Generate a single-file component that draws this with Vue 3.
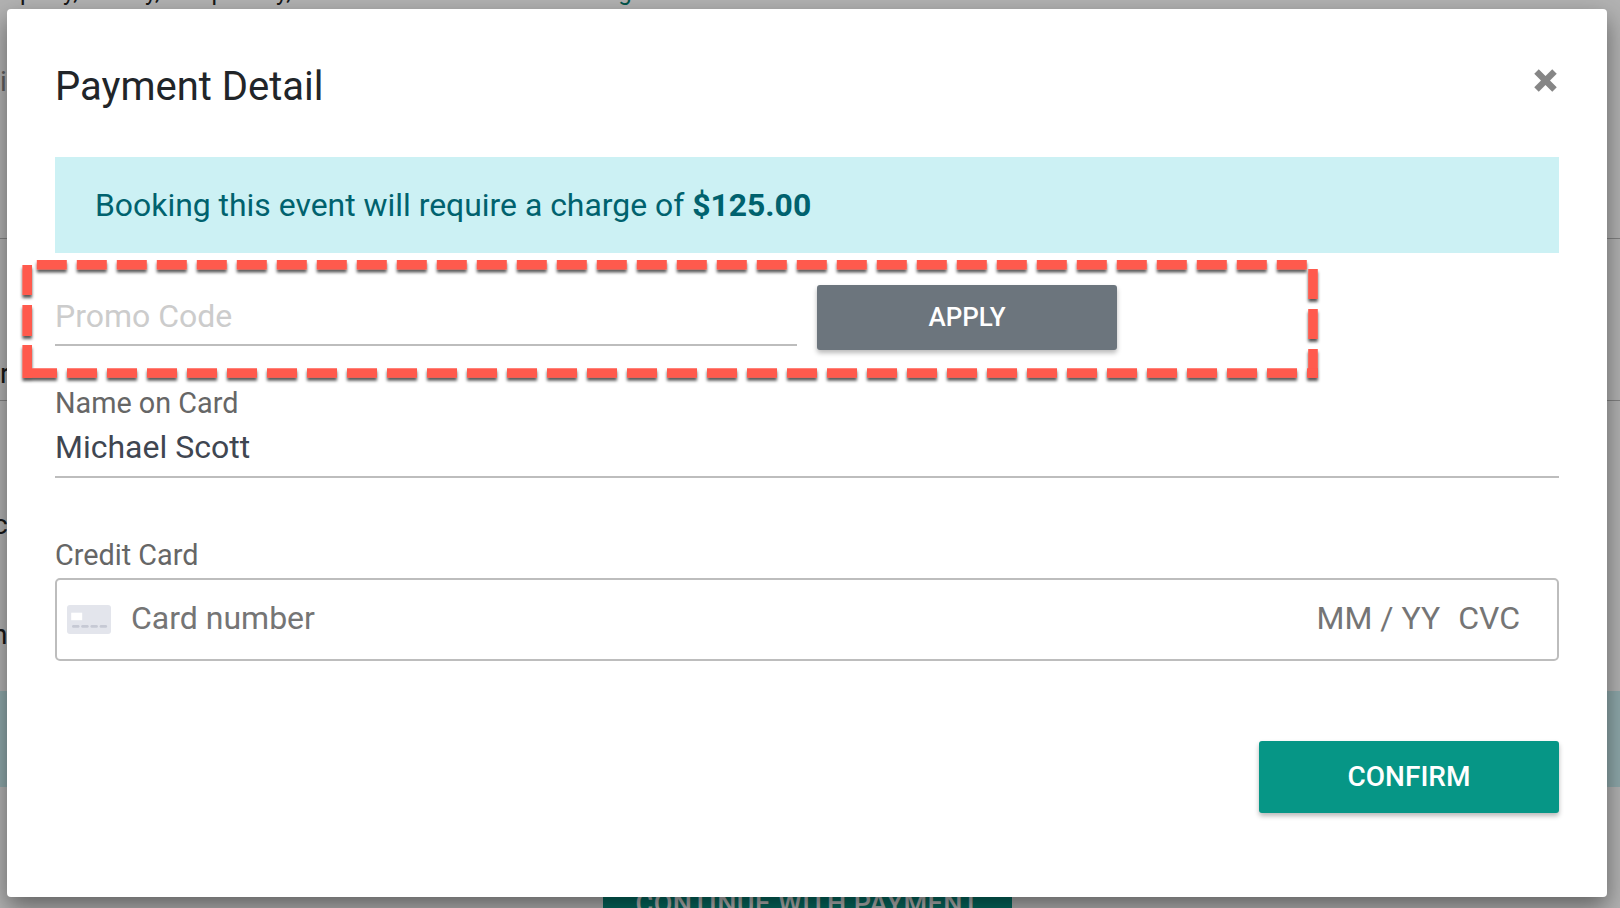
<script setup>
const rows = [
  { label: 'Name on Card', value: 'Michael Scott' }
]
</script>

<template>
  <div class="page">
    <div class="backdrop">
      <p class="bg-top">party, history, and privacy, and other details in the <span class="bg-link">booking</span></p>
      <span class="bg-edge e-i">in</span>
      <span class="bg-edge e-r">r</span>
      <span class="bg-edge e-c">c</span>
      <span class="bg-edge e-n">n</span>
      <div class="bg-rule rule-a"></div>
      <div class="bg-rule rule-b"></div>
      <div class="bg-band"></div>
      <div class="bg-btn">CONTINUE WITH PAYMENT</div>
    </div>
    <div class="scrim"></div>
    <section class="modal">
      <header class="head">
        <h2>Payment Detail</h2>
        <svg class="close" viewBox="0 0 24 24" width="27" height="27">
          <path d="M2 6 L6 2 L12 8 L18 2 L22 6 L16 12 L22 18 L18 22 L12 16 L6 22 L2 18 L8 12 Z" fill="#868686" />
        </svg>
      </header>
      <div class="alert">Booking this event will require a charge of <b>$125.00</b></div>
      <div class="promo">
        <div class="promo-input">Promo Code</div>
        <button class="btn apply">APPLY</button>
      </div>
      <div v-for="r in rows" :key="r.label" class="field">
        <label>{{ r.label }}</label>
        <div class="value">{{ r.value }}</div>
      </div>
      <div class="card-block">
        <label>Credit Card</label>
        <div class="card-box">
          <svg class="card-icon" width="44" height="29" viewBox="0 0 44 29">
            <rect width="44" height="29" rx="3" fill="#e3e5ec" />
            <rect x="4.2" y="7.7" width="11" height="7.5" fill="#fff" />
            <g fill="#c6c9d4">
              <rect x="5" y="20" width="7.5" height="2.8" rx="1.4" />
              <rect x="14.2" y="20" width="7.5" height="2.8" rx="1.4" />
              <rect x="23.4" y="20" width="7.5" height="2.8" rx="1.4" />
              <rect x="32.6" y="20" width="7.5" height="2.8" rx="1.4" />
            </g>
          </svg>
          <span class="num">Card number</span>
          <span class="exp">MM / YY</span>
          <span class="cvc">CVC</span>
        </div>
      </div>
      <div class="foot">
        <button class="btn confirm">CONFIRM</button>
      </div>
    </section>
    <svg class="dash" width="1620" height="908" viewBox="0 0 1620 908">
      <defs>
        <filter id="sh" filterUnits="userSpaceOnUse" x="0" y="240" width="1340" height="160">
          <feDropShadow dx="0" dy="3" stdDeviation="1.5" flood-color="#000" flood-opacity=".65" />
        </filter>
      </defs>
      <g fill="none" stroke="#ff5a4d" stroke-width="9.6" filter="url(#sh)">
        <path d="M36.8 264.8 H1307" stroke-dasharray="30 10" />
        <path d="M1313 269 V378" stroke-dasharray="30 10 30 10 29" />
        <path d="M1318 373 H27" stroke-dasharray="30 10" stroke-dashoffset="19" />
        <path d="M27.2 265 V378" stroke-dasharray="30 10 31 9 33" />
      </g>
    </svg>
  </div>
</template>

<style>
html, body { margin: 0; overflow: hidden; }
</style>

<style scoped>
.page {
  position: relative;
  width: 1620px;
  height: 908px;
  overflow: hidden;
  background: #fff;
  font-family: Roboto, "Liberation Sans", sans-serif;
}
.backdrop { position: absolute; inset: 0; color: #222; }
.bg-top { position: absolute; left: 20px; top: -22px; margin: 0; font-size: 24px; line-height: 28px; white-space: nowrap; }
.bg-link { color: #00796b; }
.bg-edge { position: absolute; font-size: 28px; line-height: 30px; }
.e-i { left: 0; top: 67px; color: #888; }
.e-r { left: 0; top: 359px; }
.e-c { left: -7px; top: 510px; }
.e-n { left: -8px; top: 620px; }
.bg-rule { position: absolute; left: 0; right: 0; height: 1px; background: #bbb; }
.rule-a { top: 238px; }
.rule-b { top: 400px; }
.bg-band { position: absolute; left: 0; right: 0; top: 691px; height: 96px; background: #ccf1f4; }
.bg-btn {
  position: absolute; left: 603px; top: 860px; width: 409px; height: 60px;
  background: #069686; color: #fff; text-align: center;
  font-size: 27px; font-weight: 500; line-height: 88px; letter-spacing: .5px;
  white-space: nowrap; overflow: hidden;
}
.scrim { position: absolute; inset: 0; background: rgba(0, 0, 0, .3); }
.modal {
  position: absolute;
  left: 7px; top: 9px;
  width: 1600px; height: 888px;
  box-sizing: border-box;
  padding: 0 48px;
  background: #fff;
  border-radius: 4px;
  box-shadow: 0 10px 24px rgba(0, 0, 0, .45);
}
.head { display: flex; justify-content: space-between; align-items: flex-start; height: 148px; padding-top: 50px; box-sizing: border-box; }
.head h2 { margin: 0; font-size: 40px; line-height: 56px; font-weight: 400; color: #212529; }
.close { margin-top: 8px; }
.alert {
  height: 96px; line-height: 96px; padding-left: 40px;
  background: #ccf1f4; color: #00626e; font-size: 31.9px;
}
.alert b { font-weight: 700; }
.promo { display: flex; align-items: flex-start; height: 130px; padding-top: 32px; box-sizing: border-box; }
.promo-input {
  width: 742px; height: 61px; box-sizing: border-box;
  border-bottom: 2px solid #bdbdbd;
  color: #ccc; font-size: 32px; line-height: 62px;
}
.btn { border: 0; border-radius: 3px; color: #fff; font-family: inherit; font-weight: 500; padding: 0 0 2px; box-shadow: 0 3px 5px rgba(0, 0, 0, .28); }
.apply { width: 300px; height: 65px; margin-left: 20px; background: #6c757d; font-size: 26px; }
.field { height: 121px; box-sizing: border-box; }
label { display: block; color: #666; font-size: 28.8px; line-height: 40px; }
.value {
  height: 50px; margin-top: 5px; box-sizing: border-box; border-bottom: 2px solid #bdbdbd;
  color: #3f4651; font-size: 32px; line-height: 38px;
}
.card-block { padding-top: 31px; }
.card-box {
  display: flex; align-items: center; height: 83px; box-sizing: border-box; margin-top: 3px;
  border: 2px solid #bdbdbd; border-radius: 5px; padding: 0 37px 0 10px; color: #757575; font-size: 32px;
}
.card-icon { flex: none; }
.num { margin-left: 20px; flex: 1; margin-bottom: 3px; }
.exp { margin-bottom: 3px; }
.cvc { margin-left: 18px; margin-bottom: 3px; }
.foot { display: flex; justify-content: flex-end; margin-top: 80px; }
.confirm { width: 300px; height: 72px; background: #069686; font-size: 28px; }
.dash { position: absolute; left: 0; top: 0; pointer-events: none; }
</style>
